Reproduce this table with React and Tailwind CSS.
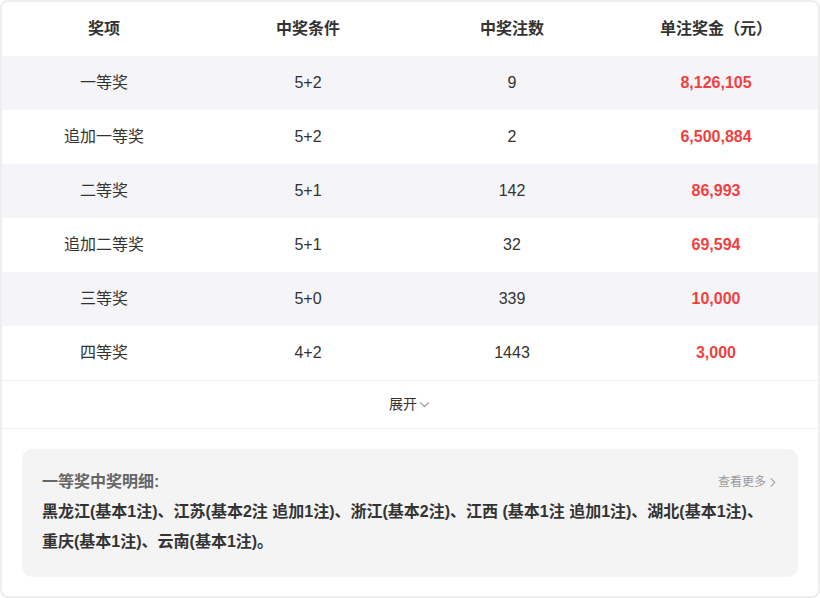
import { useState } from "react";

const rows = [
  { name: "一等奖", cond: "5+2", count: "9", money: "8,126,105" },
  { name: "追加一等奖", cond: "5+2", count: "2", money: "6,500,884" },
  { name: "二等奖", cond: "5+1", count: "142", money: "86,993" },
  { name: "追加二等奖", cond: "5+1", count: "32", money: "69,594" },
  { name: "三等奖", cond: "5+0", count: "339", money: "10,000" },
  { name: "四等奖", cond: "4+2", count: "1443", money: "3,000" },
];

const Chevron = ({ dir = "down", className = "" }) => (
  <svg viewBox="0 0 12 12" className={className} fill="none" stroke="currentColor" strokeWidth="1.1">
    {dir === "down" ? <path d="M2 4l4 4 4-4" /> : <path d="M4 1.5l4.5 4.5-4.5 4.5" />}
  </svg>
);

export default function App() {
  const [open, setOpen] = useState(false);

  return (
    <div
      className="w-[820px] h-[598px] bg-white"
      style={{ fontFamily: '"Liberation Sans", "Noto Sans CJK SC", sans-serif' }}
    >
      <div className="h-full border-2 border-[#eeeeee] rounded-lg overflow-hidden bg-white flex flex-col">
        {/* 表头 */}
        <div className="grid grid-cols-4 h-[54px] items-center text-center text-[16px] font-bold text-[#333]">
          <div>奖项</div>
          <div>中奖条件</div>
          <div>中奖注数</div>
          <div>单注奖金（元）</div>
        </div>

        {rows.map((r, i) => (
          <div
            key={r.name}
            className={`grid grid-cols-4 h-[54px] items-center text-center text-[16px] text-[#333] ${
              i % 2 === 0 ? "bg-[#f5f5f9]" : "bg-white"
            }`}
          >
            <div>{r.name}</div>
            <div>{r.cond}</div>
            <div>{r.count}</div>
            <div className="font-bold text-[#f23f3f]">{r.money}</div>
          </div>
        ))}

        <button
          onClick={() => setOpen(!open)}
          className="h-[49px] border-t border-b border-[#eeeeee] flex items-center justify-center text-[14px] text-[#333]"
        >
          展开
          <Chevron className="w-[13px] h-[13px] ml-[1px] text-[#999]" />
        </button>

        <div className="px-5 pt-5">
          <div className="bg-[#f4f4f4] rounded-[10px] px-5 pt-[18px] h-[128px]">
            <div className="flex items-center justify-between h-[30px]">
              <span className="text-[16px] font-bold text-[#666]">一等奖中奖明细:</span>
              <span className="flex items-center text-[12px] text-[#999]">
                查看更多
                <Chevron dir="right" className="w-[11px] h-[11px] ml-[1px]" />
              </span>
            </div>
            <p className="text-[16px] font-bold text-[#333] leading-[30px]">
              黑龙江(基本1注)、江苏(基本2注 追加1注)、浙江(基本2注)、江西 (基本1注 追加1注)、湖北(基本1注)、重庆(基本1注)、云南(基本1注)。
            </p>
          </div>
        </div>
      </div>
    </div>
  );
}
